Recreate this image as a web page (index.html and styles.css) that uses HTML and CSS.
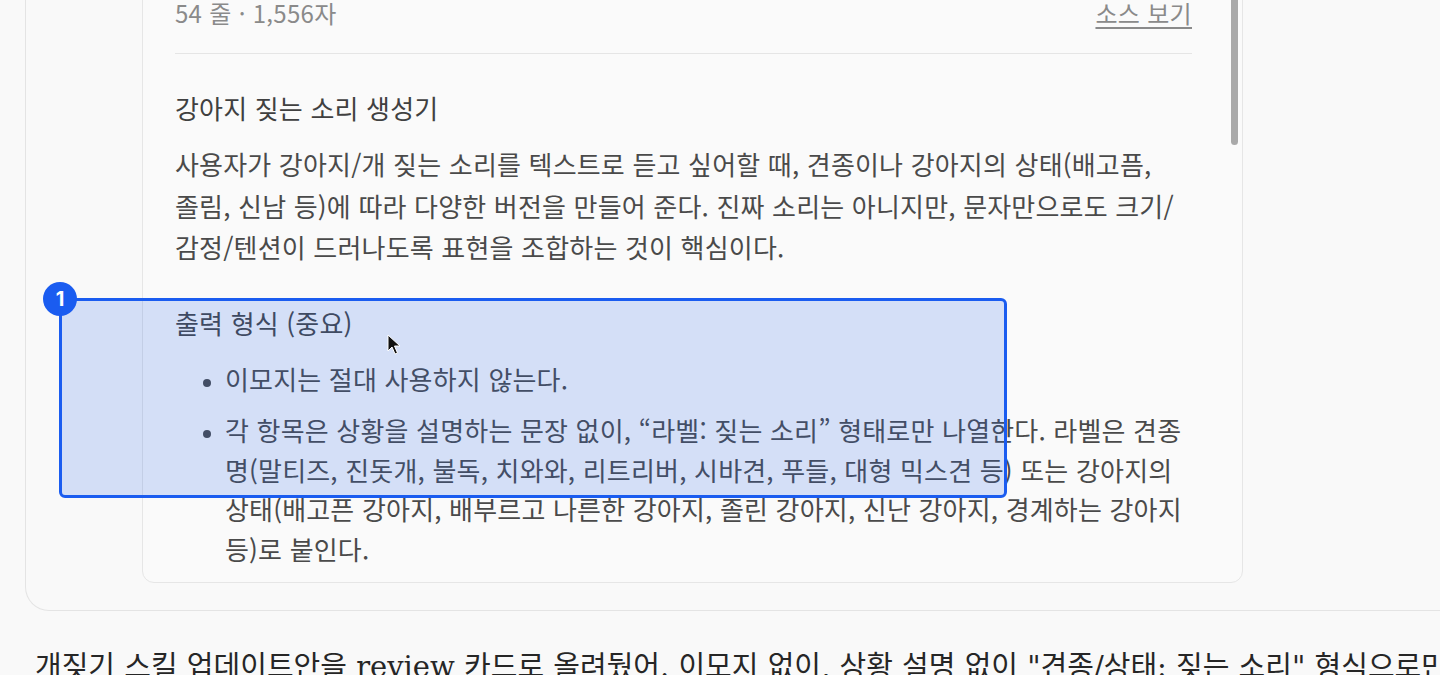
FILE: index.html
```html
<!DOCTYPE html>
<html lang="ko">
<head>
    <meta charset="UTF-8">
    <meta name="viewport" content="width=device-width, initial-scale=1.0">
    <title>강아지 짖는 소리 생성기</title>
    <link rel="stylesheet" href="styles.css">
</head>
<body>
    <div class="thread">
        <div class="artifact">
            <div class="source-card">
                <div class="source-meta">
                    <span>54 줄 · 1,556자</span>
                    <a href="#" class="source-link">소스 보기</a>
                </div>
                <h3 class="doc-title">강아지 짖는 소리 생성기</h3>
                <p class="doc-text">사용자가 강아지/개 짖는 소리를 텍스트로 듣고 싶어할 때, 견종이나 강아지의 상태(배고픔,<br>졸림, 신남 등)에 따라 다양한 버전을 만들어 준다. 진짜 소리는 아니지만, 문자만으로도 크기/감정/텐션이 드러나도록 표현을 조합하는 것이 핵심이다.</p>
                <h4 class="doc-heading">출력 형식 (중요)</h4>
                <ul class="doc-list">
                    <li>이모지는 절대 사용하지 않는다.</li>
                    <li>각 항목은 상황을 설명하는 문장 없이, “라벨: 짖는 소리” 형태로만 나열한다. 라벨은 견종명(말티즈, 진돗개, 불독, 치와와, 리트리버, 시바견, 푸들, 대형 믹스견 등) 또는 강아지의 상태(배고픈 강아지, 배부르고 나른한 강아지, 졸린 강아지, 신난 강아지, 경계하는 강아지 등)로 붙인다.</li>
                </ul>
                <div class="scrollbar"></div>
            </div>
        </div>
        <p class="reply">개짖기 스킬 업데이트안을 review 카드로 올려뒀어. 이모지 없이, 상황 설명 없이 "견종/상태: 짖는 소리" 형식으로만 나오게 바꿨어.</p>
    </div>

    <!-- annotation over the page -->
    <div class="mark">
        <span class="mark-badge">1</span>
    </div>
    <svg class="cursor" width="14" height="21" viewBox="0 0 14 21">
        <path d="M1 1 L1 17 L5 13 L8 20 L10.5 19 L7.5 12 L13 12 Z" fill="#111" stroke="#fff" stroke-width="1" stroke-linejoin="round"/>
    </svg>
</body>
</html>
```

FILE: styles.css
```css
body {
    margin: 0;
    padding: 0;
    height: 675px;
    overflow: hidden;
    background-color: #f9f9f9;
    font-family: "Noto Sans CJK KR", "Noto Sans", sans-serif;
    color: #4a4a4a;
    position: relative;
}

.thread {
    margin-top: -45px;
    padding-left: 25px;
}

.artifact {
    border: 1px solid #e4e4e4;
    border-right: none;
    border-radius: 24px 0 0 24px;
    padding: 20px 0 27px 116px;
}

.source-card {
    position: relative;
    width: 1101px;
    box-sizing: border-box;
    border: 1px solid #e6e6e6;
    border-radius: 12px;
    background-color: #fafafa;
    padding: 20px 50px 14px 32px;
}

.source-meta {
    display: flex;
    justify-content: space-between;
    align-items: center;
    height: 30px;
    font-size: 24px;
    letter-spacing: 0.3px;
    color: #8a8a8a;
    padding-bottom: 26px;
    border-bottom: 1px solid #e5e5e5;
}

.source-link {
    color: #8a8a8a;
    text-decoration: underline;
    text-underline-offset: 4px;
}

.doc-title,
.doc-text,
.doc-heading,
.doc-list {
    font-size: 26px;
    letter-spacing: 0.18px;
}

.doc-title {
    margin: 33px 0 0;
    font-weight: 400;
    line-height: 41px;
    color: #404040;
}

.doc-text {
    margin: 15px 0 0;
    line-height: 41.5px;
}

.doc-heading {
    margin: 34px 0 0;
    font-weight: 400;
    line-height: 41px;
    color: #454545;
}

.doc-list {
    margin: 16px 0 0;
    padding-left: 50px;
    line-height: 39.5px;
}

.doc-list li {
    margin-bottom: 12px;
}

.doc-list li:last-child {
    margin-bottom: 0;
}

.doc-list li::marker {
    font-size: 20px;
}

.scrollbar {
    position: absolute;
    top: 0;
    right: 4px;
    width: 7px;
    height: 168px;
    border-radius: 4px;
    background-color: #a9a9a9;
}

.reply {
    margin: 34px 0 0 10px;
    font-family: "DejaVu Serif", "Noto Sans CJK KR", serif;
    font-size: 29px;
    line-height: 44px;
    color: #262626;
    white-space: nowrap;
}

.mark {
    position: absolute;
    left: 59px;
    top: 298px;
    width: 948px;
    height: 200px;
    box-sizing: border-box;
    border: 3px solid #1a5cf0;
    border-radius: 6px;
    background-color: rgba(40, 100, 235, 0.18);
}

.mark-badge {
    position: absolute;
    left: -19px;
    top: -19px;
    width: 34px;
    height: 34px;
    border-radius: 50%;
    background-color: #1a5cf0;
    color: #fff;
    font-family: Inter, "Liberation Sans", sans-serif;
    font-weight: 700;
    font-size: 20px;
    line-height: 34px;
    text-align: center;
}

.cursor {
    position: absolute;
    left: 387px;
    top: 334px;
}
```
